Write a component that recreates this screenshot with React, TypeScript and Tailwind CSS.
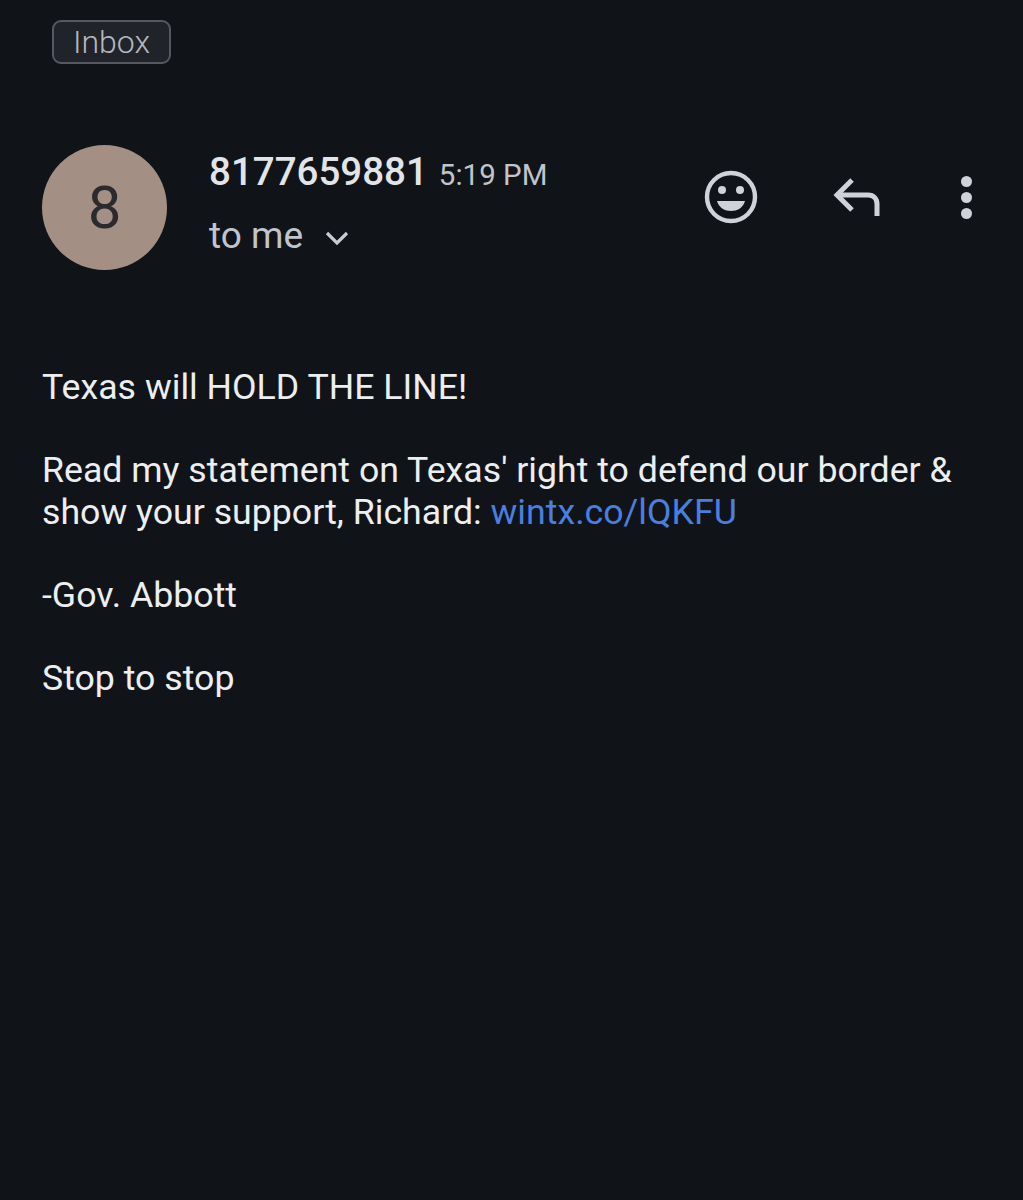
export default function App() {
  return (
    <div className="w-[1023px] h-[1200px] overflow-hidden bg-[#101418] font-['Roboto',sans-serif] text-[#e3e3e6]">
      <div className="pl-[52px] pt-[20px]">
        <div className="w-[119px] h-[44px] rounded-[9px] border-2 border-[#55585d] bg-[#202329] flex items-center justify-center text-[32px] font-light leading-none text-[#b4b7bc]">
          Inbox
        </div>
      </div>
      <div className="flex pl-[42px] pt-[81px]">
        <div className="w-[125px] h-[125px] rounded-full bg-[#a48f84] flex items-center justify-center text-[60px] leading-none text-[#2b2a2c] font-['Roboto',sans-serif] shrink-0">
          8
        </div>
        <div className="ml-[42px] w-[456px]">
          <div className="flex items-baseline h-[54px] pt-[1px]">
            <span className="text-[38.5px] leading-[52px] font-medium text-[#e3e4e8]">8177659881</span>
            <span className="ml-[11px] text-[29.5px] leading-[52px] text-[#c1c4ca]">5:19 PM</span>
          </div>
          <div className="flex items-center mt-[18px] h-[36px]">
            <span className="text-[37px] leading-none text-[#c1c4ca]">to me</span>
            <svg className="ml-[22px] mt-[6px]" width="24" height="16" viewBox="0 0 24 16" fill="none" stroke="#c8cbd1" strokeWidth="3.2">
              <path d="M2 3 L12 13 L22 3" />
            </svg>
          </div>
        </div>
        <div className="flex items-start ml-[39px] mt-[25px]">
          <svg width="54" height="54" viewBox="0 0 54 54" fill="none">
            <circle cx="27" cy="27" r="24" stroke="#cfd2d8" strokeWidth="4.4" />
            <circle cx="18" cy="20" r="4" fill="#cfd2d8" />
            <circle cx="36" cy="20" r="4" fill="#cfd2d8" />
            <path d="M13 31 H41 C39 38 33 41 27 41 C21 41 15 38 13 31 Z" fill="#cfd2d8" />
          </svg>
          <svg className="ml-[74px] mt-[8px]" width="50" height="40" viewBox="0 0 50 40" fill="none" stroke="#cfd2d8" strokeWidth="5">
            <path d="M20 2 L5 17 L20 32" />
            <path d="M5 17 H36 C42 17 45 21 45 26 V38" />
          </svg>
          <div className="ml-[79px] mt-[6px] flex flex-col gap-[5px]">
            <div className="w-[11px] h-[11px] rounded-full bg-[#cfd2d8]" />
            <div className="w-[11px] h-[11px] rounded-full bg-[#cfd2d8]" />
            <div className="w-[11px] h-[11px] rounded-full bg-[#cfd2d8]" />
          </div>
        </div>
      </div>
      <div className="pl-[42px] pt-[97px] w-[1000px] text-[35.7px] leading-[41.6px] text-[#eceef0]">
        <p>Texas will HOLD THE LINE!</p>
        <p className="mt-[41.6px]">Read my statement on Texas' right to defend our border &amp;</p>
        <p>
          show your support, Richard: <span className="text-[#4a7fe0]">wintx.co/lQKFU</span>
        </p>
        <p className="mt-[41.6px]">-Gov. Abbott</p>
        <p className="mt-[41.6px]">Stop to stop</p>
      </div>
    </div>
  );
}
